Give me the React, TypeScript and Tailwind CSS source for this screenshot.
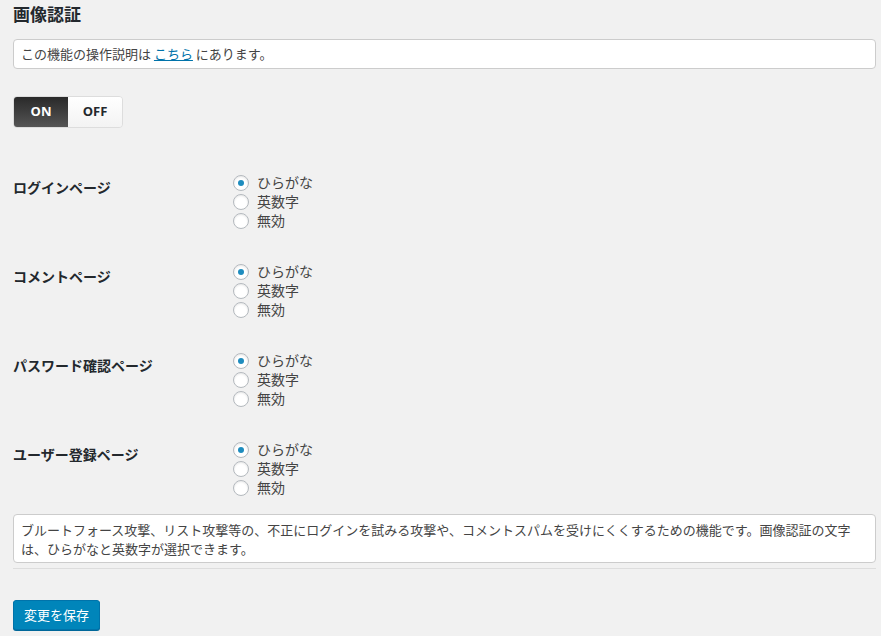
import React, { useState } from 'react';

const font = "font-['Noto_Sans_CJK_JP','Noto_Sans',sans-serif]";

const pages = ['ログインページ', 'コメントページ', 'パスワード確認ページ', 'ユーザー登録ページ'];
const options = ['ひらがな', '英数字', '無効'];

const Radio: React.FC<{ checked: boolean; label: string; onChange: () => void }> = ({ checked, label, onChange }) => (
  <label className="flex items-center h-[19px] cursor-pointer" onClick={onChange}>
    <span className="w-4 h-4 rounded-full border border-[#b4b9be] bg-white shadow-[inset_0_1px_2px_rgba(0,0,0,0.1)] flex items-center justify-center">
      {checked && <span className="w-[6px] h-[6px] rounded-full bg-[#1e8cbe]" />}
    </span>
    <span className="ml-2 text-[14px] text-[#444]">{label}</span>
  </label>
);

export default function App() {
  const [on, setOn] = useState(true);
  const [values, setValues] = useState<number[]>([0, 0, 0, 0]);

  return (
    <div className={`min-h-screen bg-[#f1f1f1] ${font} text-[#444] pl-[13px] pr-[5px]`}>
      <h2 className="pt-[3px] h-[39px] text-[17px] font-bold text-[#23282d] leading-[22px]">画像認証</h2>

      <div className="h-[30px] bg-white border border-[#ccc] rounded-[4px] px-[7px] flex items-center text-[13px]">
        この機能の操作説明は&nbsp;<a href="#" className="text-[#0073aa] underline">こちら</a>&nbsp;にあります。
      </div>

      <div className="mt-[27px] flex w-[110px] h-[32px] rounded-[4px] border border-[#ddd] overflow-hidden font-['Open_Sans',sans-serif] text-[13px] font-bold">
        <button
          onClick={() => setOn(true)}
          className={`w-[54px] ${on ? 'bg-gradient-to-b from-[#2a2a2a] to-[#555] text-white' : 'bg-gradient-to-b from-white to-[#f3f3f3] text-[#23282d]'}`}
        >
          ON
        </button>
        <button
          onClick={() => setOn(false)}
          className={`flex-1 ${!on ? 'bg-gradient-to-b from-[#2a2a2a] to-[#555] text-white' : 'bg-gradient-to-b from-white to-[#f3f3f3] text-[#23282d]'}`}
        >
          OFF
        </button>
      </div>

      <div className="mt-[30px]">
        {pages.map((page, i) => (
          <div key={page} className="flex h-[89px]">
            <div className="w-[220px] pt-[20px] text-[14px] font-bold text-[#23282d] leading-[19px]">{page}</div>
            <div className="pt-[15px]">
              {options.map((opt, j) => (
                <Radio
                  key={opt}
                  label={opt}
                  checked={values[i] === j}
                  onChange={() => setValues(values.map((v, k) => (k === i ? j : v)))}
                />
              ))}
            </div>
          </div>
        ))}
      </div>

      <div className="h-[49px] bg-white border border-[#ccc] rounded-[4px] px-[7px] py-[5px] text-[13px] leading-[19px]">
        ブルートフォース攻撃、リスト攻撃等の、不正にログインを試みる攻撃や、コメントスパムを受けにくくするための機能です。画像認証の文字は、ひらがなと英数字が選択できます。
      </div>

      <div className="mt-[5px] h-px bg-[#ddd]" />

      <button className="mt-[31px] h-[30px] px-[10px] rounded-[3px] bg-[#0085ba] border border-[#0073aa] shadow-[0_1px_0_#006799] text-white text-[13px]">
        変更を保存
      </button>
    </div>
  );
}
